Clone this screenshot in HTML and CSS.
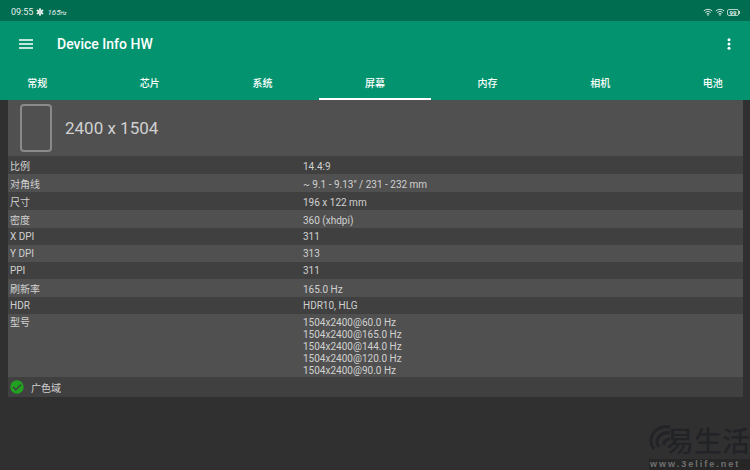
FILE: index.html
```
<!DOCTYPE html>
<html lang="zh-CN">
<head>
  <meta charset="utf-8">
  <title>Device Info HW</title>
  <meta name="viewport" content="width=device-width, initial-scale=1.0">
  <link rel="stylesheet" href="styles.css">
</head>
<body>

  <!-- Status bar -->
  <div class="status-bar">
    <span>09:55</span>
    <svg class="fan-icon" viewBox="0 0 16 16" aria-hidden="true">
      <g fill="currentColor">
        <ellipse cx="8" cy="3.6" rx="2" ry="3.4"/>
        <ellipse cx="8" cy="3.6" rx="2" ry="3.4" transform="rotate(60 8 8)"/>
        <ellipse cx="8" cy="3.6" rx="2" ry="3.4" transform="rotate(120 8 8)"/>
        <ellipse cx="8" cy="3.6" rx="2" ry="3.4" transform="rotate(180 8 8)"/>
        <ellipse cx="8" cy="3.6" rx="2" ry="3.4" transform="rotate(240 8 8)"/>
        <ellipse cx="8" cy="3.6" rx="2" ry="3.4" transform="rotate(300 8 8)"/>
        <circle cx="8" cy="8" r="2"/>
      </g>
    </svg>
    <span class="refresh">165<small>Hz</small></span>
    <div class="status-right">
      <svg class="wifi-icon" viewBox="0 0 20 16" aria-hidden="true">
        <path d="M1.5 6a12.5 12.5 0 0 1 17 0M4.5 9a8 8 0 0 1 11 0M7.3 12a4 4 0 0 1 5.4 0" fill="none" stroke="currentColor" stroke-width="1.8"/>
        <circle cx="10" cy="14" r="1.5" fill="currentColor"/>
      </svg>
      <svg class="wifi-icon" viewBox="0 0 20 16" aria-hidden="true">
        <path d="M1.5 6a12.5 12.5 0 0 1 17 0M4.5 9a8 8 0 0 1 11 0M7.3 12a4 4 0 0 1 5.4 0" fill="none" stroke="currentColor" stroke-width="1.8"/>
        <circle cx="10" cy="14" r="1.5" fill="currentColor"/>
      </svg>
      <span class="battery">99</span>
    </div>
  </div>

  <!-- App bar -->
  <header class="app-header">
    <div class="toolbar">
      <button class="icon-button" aria-label="Menu">
        <svg width="14" height="10" viewBox="0 0 14 10"><path d="M0 1h14M0 5h14M0 9h14" stroke="currentColor" stroke-width="1.6"/></svg>
      </button>
      <h1>Device Info HW</h1>
      <button class="icon-button more" aria-label="More">
        <svg width="4" height="12" viewBox="0 0 4 12"><g fill="currentColor"><circle cx="2" cy="1.8" r="1.5"/><circle cx="2" cy="6" r="1.5"/><circle cx="2" cy="10.2" r="1.5"/></g></svg>
      </button>
    </div>
    <nav class="tabs">
      <button class="tab">常规</button>
      <button class="tab">芯片</button>
      <button class="tab">系统</button>
      <button class="tab active">屏幕</button>
      <button class="tab">内存</button>
      <button class="tab">相机</button>
      <button class="tab">电池</button>
    </nav>
  </header>

  <!-- Screen info -->
  <main class="content">
    <div class="resolution">
      <div class="screen-shape"></div>
      <span>2400 x 1504</span>
    </div>
    <table class="info-table">
      <tbody>
        <tr class="tall"><th>比例</th><td>14.4:9</td></tr>
        <tr class="tall"><th>对角线</th><td>~ 9.1 - 9.13" / 231 - 232 mm</td></tr>
        <tr class="tall"><th>尺寸</th><td>196 x 122 mm</td></tr>
        <tr class="tall"><th>密度</th><td>360 (xhdpi)</td></tr>
        <tr><th>X DPI</th><td>311</td></tr>
        <tr><th>Y DPI</th><td>313</td></tr>
        <tr><th>PPI</th><td>311</td></tr>
        <tr class="tall"><th>刷新率</th><td>165.0 Hz</td></tr>
        <tr><th>HDR</th><td>HDR10, HLG</td></tr>
        <tr class="modes">
          <th>型号</th>
          <td>1504x2400@60.0 Hz<br>1504x2400@165.0 Hz<br>1504x2400@144.0 Hz<br>1504x2400@120.0 Hz<br>1504x2400@90.0 Hz</td>
        </tr>
      </tbody>
    </table>
    <div class="feature">
      <svg width="14" height="14" viewBox="0 0 14 14" aria-hidden="true">
        <circle cx="7" cy="7" r="6.7" fill="#22a022"/>
        <path d="M3 7l2.8 2.8L11 4.5" fill="none" stroke="#404040" stroke-width="1.4"/>
      </svg>
      <span>广色域</span>
    </div>
  </main>

  <!-- Watermark -->
  <div class="watermark">
    <div class="brand">
      <svg width="22" height="30" viewBox="0 0 22 30" aria-hidden="true">
        <path d="M21 2A16 14 0 0 0 5 24M21 8A11 9 0 0 0 10 22M21 14A6 5 0 0 0 15 20" fill="none" stroke="currentColor" stroke-width="3"/>
      </svg>
      <span>易生活</span>
    </div>
    <div class="site">www.3elife.net</div>
  </div>

</body>
</html>
```
FILE: styles.css
```
body {
  margin: 0;
  background-color: #303030;
  color: #d0d0d0;
  font-family: Roboto, "Noto Sans CJK SC", sans-serif;
  font-size: 10px;
}

button {
  padding: 0;
  border: none;
  background: none;
  color: inherit;
  font-family: inherit;
  cursor: pointer;
}

svg {
  display: block;
}

.status-bar {
  display: flex;
  align-items: center;
  gap: 3px;
  height: 21px;
  padding: 3px 9px 0 11px;
  box-sizing: border-box;
  background-color: #006c50;
  color: #e4f1ed;
  font-size: 9px;
}

.fan-icon {
  width: 8px;
  height: 8px;
}

.refresh {
  font-size: 8px;
  font-style: italic;
}

.refresh small {
  font-size: 5px;
}

.status-right {
  display: flex;
  align-items: center;
  gap: 2px;
  margin-left: auto;
}

.wifi-icon {
  width: 10px;
  height: 8px;
}

.battery {
  position: relative;
  width: 10px;
  margin-right: 2px;
  border: 1px solid #b0d4c9;
  border-radius: 2px;
  font-size: 6px;
  font-weight: bold;
  line-height: 5px;
  text-align: center;
}

.battery::after {
  content: "";
  position: absolute;
  top: 1px;
  right: -2px;
  width: 1px;
  height: 3px;
  background-color: #b0d4c9;
}

.app-header {
  background-color: #03946f;
  color: #fff;
  overflow: hidden;
}

.toolbar {
  display: flex;
  align-items: center;
  height: 46px;
  padding: 0 18px;
}

.icon-button {
  display: flex;
  align-items: center;
  justify-content: center;
  width: 15px;
  height: 24px;
}

.more {
  width: 6px;
  margin-left: auto;
}

.toolbar h1 {
  margin: 0 0 0 24px;
  font-size: 14px;
  font-weight: 500;
}

/* the strip is a bit wider than the window, both ends are cut off */
.tabs {
  display: flex;
  margin: 0 -19px;
}

.tab {
  flex: 1;
  height: 33px;
  border-bottom: 2px solid transparent;
  font-size: 10px;
  font-weight: 500;
}

.tab.active {
  border-bottom-color: #fff;
}

.content {
  margin: 0 7px 0 8px;
}

.resolution {
  display: flex;
  align-items: center;
  gap: 13px;
  height: 56px;
  padding-left: 12px;
  background-color: #505050;
  font-size: 17px;
}

.screen-shape {
  width: 28px;
  height: 44px;
  border: 2px solid #8a8a8a;
  border-radius: 4px;
}

.info-table {
  width: 100%;
  border-collapse: collapse;
  table-layout: fixed;
}

.info-table th,
.info-table td {
  height: 17px;
  padding: 0 2px;
  font-weight: normal;
  line-height: 12px;
  text-align: left;
}

.info-table th {
  width: 40%;
  box-sizing: border-box;
}

.info-table td {
  padding-left: 1px;
}

.info-table .tall th,
.info-table .tall td {
  height: 18px;
  padding-top: 4px;
  box-sizing: border-box;
}

.info-table tr:nth-child(odd),
.feature {
  background-color: #404040;
}

.info-table tr:nth-child(even) {
  background-color: #505050;
}

.info-table .modes th,
.info-table .modes td {
  padding-top: 3px;
  padding-bottom: 0;
  height: 60px;
  vertical-align: top;
}

.feature {
  display: flex;
  align-items: center;
  gap: 7px;
  height: 20px;
  padding-left: 2px;
}

.watermark {
  position: absolute;
  right: 0;
  bottom: 0;
  color: #222326;
}

.brand {
  display: flex;
  align-items: center;
  justify-content: flex-end;
  height: 38px;
  font-size: 28px;
  font-weight: 500;
}

.brand svg {
  margin-right: -5px;
}

.site {
  padding-left: 1px;
  background-color: #262626;
  color: #707070;
  font-family: "Liberation Sans", sans-serif;
  font-size: 9px;
  font-weight: bold;
  letter-spacing: 2px;
  line-height: 11px;
}
```
